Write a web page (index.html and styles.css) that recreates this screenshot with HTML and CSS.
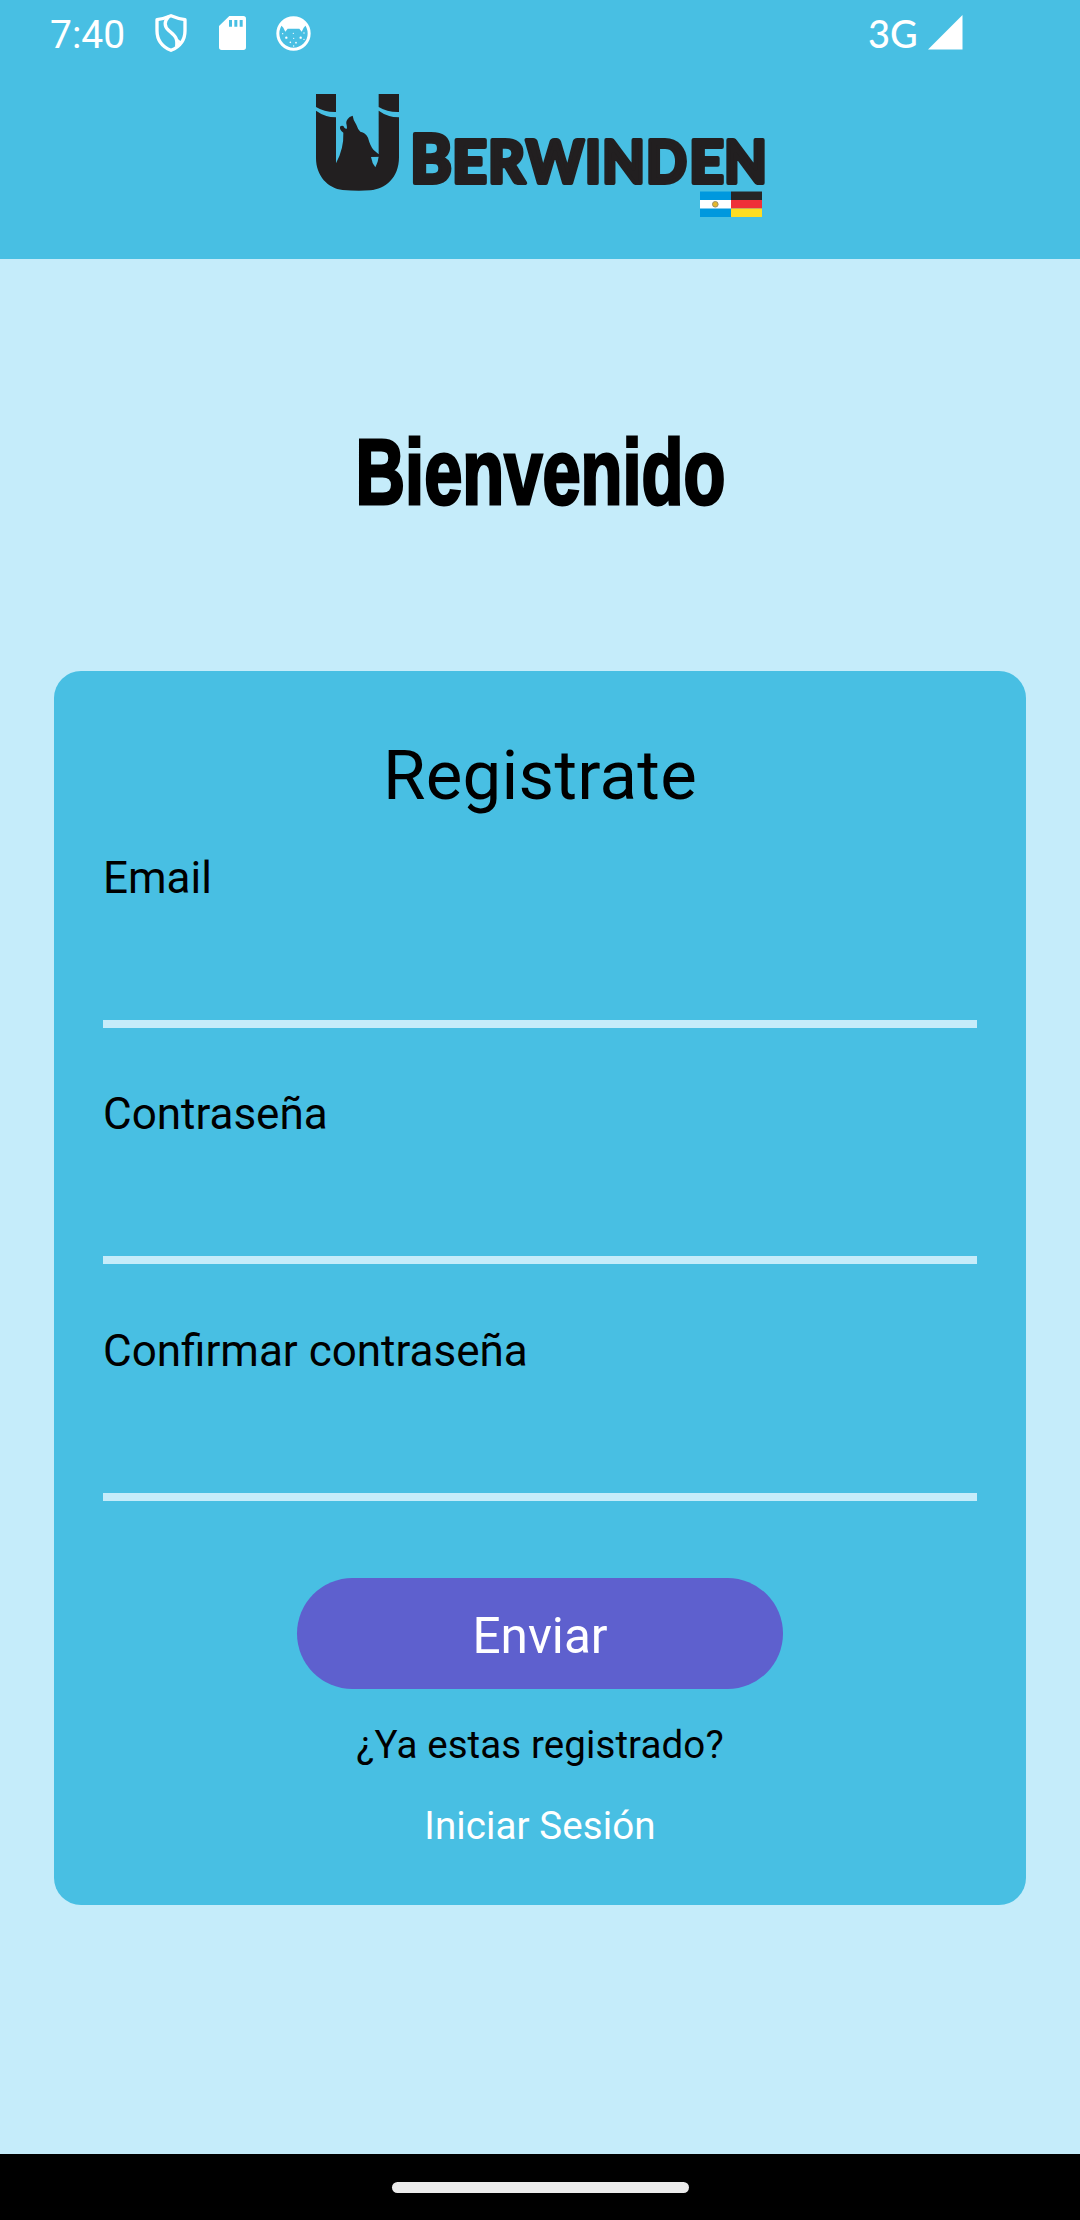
FILE: index.html
```html
<!DOCTYPE html>
<html lang="es">
<head>
<meta charset="utf-8">
<title>Überwinden - Registro</title>
<link rel="stylesheet" href="styles.css">
</head>
<body>
<div class="screen">
  <header class="header">
    <div class="status">
      <span class="clock">7:40</span>
      <svg class="icon-shield" width="32" height="38" viewBox="0 0 96 114">
        <path d="M48 5C36 10 20 15 6 17V50C6 78 22 98 48 109C74 98 90 78 90 50V17C76 15 60 10 48 5Z" fill="none" stroke="#fff" stroke-width="10" stroke-linejoin="round"/>
        <path d="M41 8C28 22 26 36 42 50C60 66 68 70 65 98" fill="none" stroke="#fff" stroke-width="10"/>
        <path d="M62 70C70 80 72 84 66 98L80 84Z" fill="#fff"/>
      </svg>
      <svg class="icon-sd" width="27" height="34" viewBox="0 0 81 102">
        <path fill="#fff" fill-rule="evenodd" d="M31 0H73Q81 0 81 8V94Q81 102 73 102H8Q0 102 0 94V30ZM30 12V32H39V12ZM46 12V32H55V12ZM62 12V32H71V12Z"/>
      </svg>
      <svg class="icon-face" width="35" height="35" viewBox="0 0 105 105">
        <circle cx="52.500" cy="52.500" r="47" fill="none" stroke="#fff" stroke-width="9"/>
        <path fill="#fff" d="M14 26C32 0 73 0 91 26L83 35L77 47L70 38H35L28 47L22 35Z"/>
        <g fill="#fff"><circle cx="31" cy="65" r="3.500"/><circle cx="74" cy="65" r="3.500"/><circle cx="52" cy="52" r="2"/><circle cx="43" cy="79" r="2.500"/><circle cx="60" cy="80" r="2.500"/><circle cx="20" cy="53" r="2"/><circle cx="84" cy="51" r="2"/><circle cx="53" cy="67" r="2"/><circle cx="84" cy="70" r="2"/><circle cx="53" cy="90" r="2"/></g>
      </svg>
      <span class="network">3G</span>
      <svg class="icon-signal" width="35" height="35" viewBox="0 0 35 35"><path fill="#fff" d="M34.500 0V34.500H0Z"/></svg>
    </div>
    <svg class="logo" width="455" height="125" viewBox="315 93 455 125">
      <g transform="translate(300 80) scale(.33333)" fill="#221f20">
        <path d="M48 42H108V96Q74 97 48 81Z"/>
        <path d="M236 42H297V96Q262 97 236 81Z"/>
        <path d="M48 92Q74 111 108 112V250Q132 205 130 158Q118 149 120 140Q124 136 130 138Q134 147 139 147Q142 146 140 136Q135 122 149 111L158 107Q159 119 169 134Q174 149 181 155Q197 158 204 173Q211 199 221 210L236 223V92Q262 111 297 112V232C297 294 256 327 211 331Q172 334 128 330C84 325 48 288 48 234Z"/>
        <path d="M213 231L236 230Q234 248 226 262Q216 250 213 231Z" fill="#48bfe3"/>
        <path d="M219 226H236" stroke="#221f20" stroke-width="6"/>
      </g>
      <text class="wordmark" y="183"><tspan class="wordmark-initial" x="410" textLength="42" lengthAdjust="spacingAndGlyphs">B</tspan><tspan x="452" textLength="35" lengthAdjust="spacingAndGlyphs">E</tspan><tspan x="488" textLength="37" lengthAdjust="spacingAndGlyphs">R</tspan><tspan x="526" textLength="58" lengthAdjust="spacingAndGlyphs">W</tspan><tspan x="585" textLength="16" lengthAdjust="spacingAndGlyphs">I</tspan><tspan x="602" textLength="43" lengthAdjust="spacingAndGlyphs">N</tspan><tspan x="646" textLength="41" lengthAdjust="spacingAndGlyphs">D</tspan><tspan x="689" textLength="35" lengthAdjust="spacingAndGlyphs">E</tspan><tspan x="724" textLength="43" lengthAdjust="spacingAndGlyphs">N</tspan></text>
      <path fill="#0098de" d="M700 191.500H731V217H700Z"/>
      <path fill="#fff" d="M700 200H731V208.500H700Z"/>
      <circle cx="715.300" cy="204.300" r="2.800" fill="#e5b82d" stroke="#9c9066"/>
      <path fill="#262626" d="M731 191.500H762V200H731Z"/>
      <path fill="#ef3038" d="M731 200H762V208.500H731Z"/>
      <path fill="#ffdd22" d="M731 208.500H762V217H731Z"/>
    </svg>
  </header>

  <main class="content">
    <svg class="welcome" width="400" height="120" viewBox="0 0 400 120" role="heading">
      <text x="15.500" y="91.500" textLength="370" lengthAdjust="spacingAndGlyphs">Bienvenido</text>
    </svg>
    <form class="card">
      <h2 class="title">Registrate</h2>
      <label class="field">Email<input class="input" type="text"></label>
      <label class="field">Contraseña<input class="input" type="password"></label>
      <label class="field">Confirmar contraseña<input class="input" type="password"></label>
      <button class="submit" type="button">Enviar</button>
      <p class="question">¿Ya estas registrado?</p>
      <a class="login">Iniciar Sesión</a>
    </form>
  </main>
  <footer class="navbar"><div class="handle"></div></footer>
</div>
</body>
</html>
```
FILE: styles.css
```css
* { box-sizing: border-box; }
body { margin: 0; font-family: Roboto, sans-serif; color: #000; }
.screen {
  width: 1080px;
  height: 2220px;
  display: flex;
  flex-direction: column;
  background: #c5ecfa;
}
.header {
  height: 259px;
  background: #48bfe3;
  display: flex;
  flex-direction: column;
}
.status {
  height: 66px;
  padding-left: 50px;
  display: flex;
  align-items: center;
  color: #fff;
}
.clock { width: 105px; font-size: 39px; line-height: 66px; padding-top: 3px; }
.icon-sd { margin-left: 32px; }
.icon-face { margin-left: 30px; }
.network { font-family: Lato, sans-serif; font-size: 38px; font-weight: 500; margin-left: 557px; width: 60px; line-height: 64px; }
.icon-signal { margin-top: -1px; }
.logo { margin: 27px 0 0 315px; overflow: visible; }
.wordmark {
  font-family: Lato, sans-serif;
  font-weight: 900;
  font-size: 59px;
  fill: #221f20;
  stroke: #221f20;
  stroke-width: 4px;
  stroke-linejoin: round;
}
.wordmark-initial { font-size: 67px; }
.content {
  flex: 1;
  display: flex;
  flex-direction: column;
  align-items: center;
}
.welcome {
  margin-top: 153px;
  overflow: visible;
  font-family: "Liberation Sans", sans-serif;
  font-weight: 700;
  font-size: 93px;
  stroke: #000;
  stroke-width: 3px;
}
.card {
  width: 972px;
  height: 1234px;
  margin-top: 139px;
  padding: 65px 49px 0;
  border-radius: 27px;
  background: #48bfe3;
  display: flex;
  flex-direction: column;
  align-items: center;
}
.title { margin: 0 0 23px; font-size: 69px; line-height: 80px; font-weight: 400; letter-spacing: .25px; }
.field {
  width: 100%;
  height: 236px;
  font-size: 44px;
  line-height: 78px;
  display: flex;
  flex-direction: column;
}
.field + .field { height: 237px; }
.input {
  width: 100%;
  height: 111px;
  padding: 0;
  border: 0;
  border-bottom: 8px solid #c5ecfa;
  background: transparent;
  outline: none;
}
.submit {
  width: 486px;
  height: 111px;
  margin-top: 29px;
  padding: 4px 0 0;
  border: 0;
  border-radius: 56px;
  background: #5e60ce;
  color: #fff;
  font: 49.5px Roboto, sans-serif;
}
.question { margin: 30px 0 0; font-size: 38.5px; line-height: 52px; letter-spacing: .1px; }
.login { margin-top: 29px; font-size: 38.5px; line-height: 52px; color: #fff; letter-spacing: .1px; }
.navbar {
  height: 66px;
  background: #000;
  display: flex;
  align-items: center;
  justify-content: center;
}
.handle { width: 297px; height: 11px; border-radius: 6px; background: #ebebeb; }
```
